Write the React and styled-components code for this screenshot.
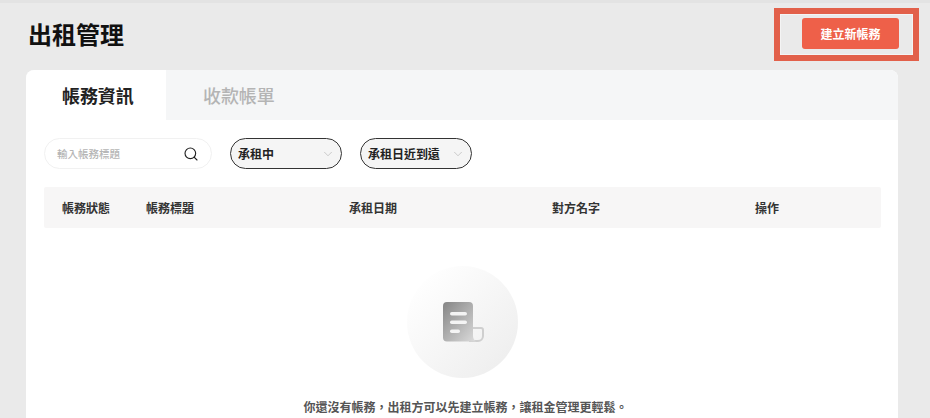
import React from "react";
import styled, { createGlobalStyle } from "styled-components";
import { Search, ChevronDown } from "lucide-react";

const Global = createGlobalStyle`
  html, body { margin: 0; padding: 0; background: #eaeaea; }
  * { box-sizing: border-box; }
  body { font-family: "Noto Sans CJK TC", "Noto Sans", sans-serif; overflow: hidden; }
`;

const Page = styled.div`
  width: 930px;
  height: 418px;
  overflow: hidden;
  background: #eaeaea;
  border-top: 3px solid #e3e3e3;
  display: flex;
  flex-direction: column;
`;

const Header = styled.header`
  display: flex;
  justify-content: space-between;
  align-items: center;
  height: 67px;
  padding: 5px 11px 9px 28px;
`;

const Title = styled.h1`
  margin: 0 0 2px;
  font-size: 24px;
  line-height: 32px;
  font-weight: 700;
  color: #111;
`;

const Highlight = styled.div`
  width: 145px;
  height: 53px;
  border: 6px solid #e2604a;
  outline: 1px solid #f4f4f4;
  outline-offset: -7px;
  display: flex;
  justify-content: flex-end;
  align-items: flex-start;
  padding: 4px 14px 0 0;
`;

const CreateButton = styled.button`
  width: 97px;
  height: 31px;
  border: 0;
  border-radius: 3px;
  background: #ee6049;
  color: #fff;
  font: 700 12px/31px "Noto Sans CJK TC", sans-serif;
  padding: 0;
`;

const Card = styled.section`
  margin-left: 26px;
  width: 872px;
  flex: 1;
  background: #fff;
  border-radius: 8px 8px 0 0;
  overflow: hidden;
`;

const TabBar = styled.div`
  display: flex;
  height: 50px;
  background: #f5f6f7;
`;

const Tab = styled.div`
  width: 140px;
  display: flex;
  align-items: center;
  padding-left: ${p => (p.$active ? "36px" : "37px")};
  padding-bottom: 1px;
  font-size: 18px;
  letter-spacing: -0.1px;
  font-weight: ${p => (p.$active ? 700 : 500)};
  color: ${p => (p.$active ? "#222" : "#b4b4b4")};
  background: ${p => (p.$active ? "#fff" : "transparent")};
  border-radius: ${p => (p.$active ? "8px 0 0 0" : "0")};
`;

const Body = styled.div`
  padding: 18px 17px 0 18px;
`;

const Filters = styled.div`
  display: flex;
  gap: 18px;
`;

const SearchBox = styled.div`
  width: 168px;
  height: 31px;
  border: 1px solid #f1f1f1;
  border-radius: 16px;
  display: flex;
  align-items: center;
  justify-content: space-between;
  padding: 0 12px 0 12px;
  color: #222;
`;

const Placeholder = styled.span`
  font-size: 10.5px;
  font-weight: 500;
  color: #b5b5b5;
`;

const Select = styled.div`
  width: 112px;
  height: 31px;
  border: 1px solid #333;
  border-radius: 16px;
  background: #f5f5f5;
  display: flex;
  align-items: center;
  justify-content: space-between;
  padding: 0 6px 0 7px;
  font-size: 12px;
  letter-spacing: -0.03px;
  font-weight: 700;
  color: #222;
  svg { color: #aaa; }
`;

const TableHead = styled.div`
  margin-top: 18px;
  height: 41px;
  background: #f7f6f6;
  border-radius: 2px;
  display: grid;
  grid-template-columns: 84px 203px 203px 203px 1fr;
  align-items: center;
  padding-left: 18px;
  font-size: 12px;
  font-weight: 700;
  color: #333;
`;

const Empty = styled.div`
  display: flex;
  flex-direction: column;
  align-items: center;
  padding-top: 38px;
`;

const Circle = styled.div`
  width: 111px;
  height: 112px;
  border-radius: 50%;
  background: linear-gradient(135deg, #ffffff 10%, #efefef 85%);
  display: flex;
  align-items: center;
  justify-content: center;
  padding-left: 1px;
`;

const EmptyText = styled.p`
  margin: 20px 0 0 6px;
  font-size: 12px;
  line-height: 18px;
  font-weight: 700;
  color: #555;
`;

const DocIcon = () => (
  <svg width="41" height="40" viewBox="0 0 41 40" aria-hidden="true">
    <defs>
      <linearGradient id="doc" x1="0" y1="0" x2="1" y2="1">
        <stop offset="0" stopColor="#858585" />
        <stop offset="1" stopColor="#dcdcdc" />
      </linearGradient>
    </defs>
    <path d="M29 26h9a2 2 0 0 1 2 2v6a5 5 0 0 1-5 5H26" fill="none" stroke="#cfcfcf" strokeWidth="2" />
    <path d="M4 0h22a4 4 0 0 1 4 4v30c0 2 1 4 3 5.5H4a4 4 0 0 1-4-4V4a4 4 0 0 1 4-4z" fill="url(#doc)" />
    <rect x="7" y="10" width="17" height="3.6" rx="1.8" fill="#f4f4f4" />
    <rect x="7" y="18.5" width="17" height="3.6" rx="1.8" fill="#f4f4f4" />
    <rect x="7" y="27.5" width="10" height="3.6" rx="1.8" fill="#f4f4f4" />
  </svg>
);

export default function App() {
  return (
    <>
      <Global />
      <Page>
        <Header>
          <Title>出租管理</Title>
          <Highlight>
            <CreateButton>建立新帳務</CreateButton>
          </Highlight>
        </Header>
        <Card>
          <TabBar>
            <Tab $active>帳務資訊</Tab>
            <Tab>收款帳單</Tab>
          </TabBar>
          <Body>
            <Filters>
              <SearchBox>
                <Placeholder>輸入帳務標題</Placeholder>
                <Search size={16} strokeWidth={1.7} />
              </SearchBox>
              <Select>
                承租中
                <ChevronDown size={14} strokeWidth={1} />
              </Select>
              <Select>
                承租日近到遠
                <ChevronDown size={14} strokeWidth={1} />
              </Select>
            </Filters>
            <TableHead>
              <span>帳務狀態</span>
              <span>帳務標題</span>
              <span>承租日期</span>
              <span>對方名字</span>
              <span>操作</span>
            </TableHead>
            <Empty>
              <Circle>
                <DocIcon />
              </Circle>
              <EmptyText>你還沒有帳務，出租方可以先建立帳務，讓租金管理更輕鬆。</EmptyText>
            </Empty>
          </Body>
        </Card>
      </Page>
    </>
  );
}
